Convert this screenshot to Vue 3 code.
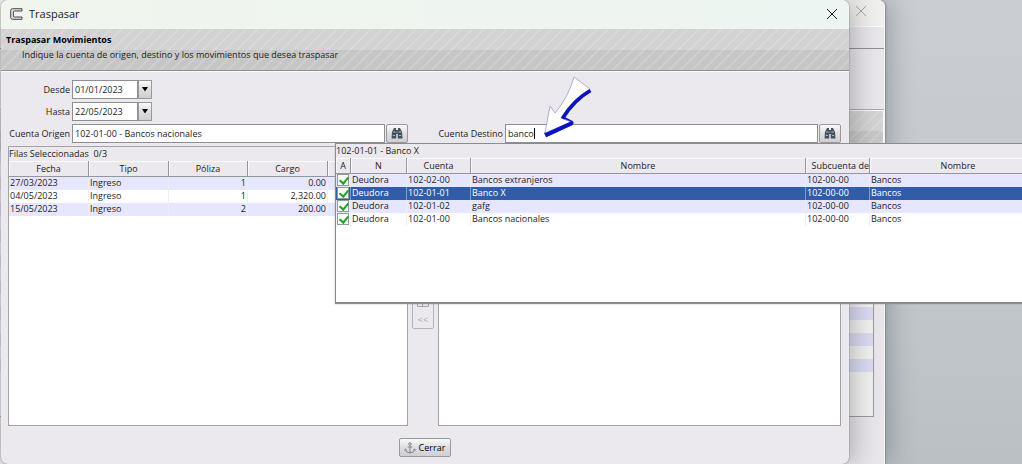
<script setup>
import { ref } from 'vue'

const desde = ref('01/01/2023')
const hasta = ref('22/05/2023')
const origen = ref('102-01-00 - Bancos nacionales')
const destino = ref('banco')

const movimientos = [
  { fecha: '27/03/2023', tipo: 'Ingreso', poliza: '1', cargo: '0.00' },
  { fecha: '04/05/2023', tipo: 'Ingreso', poliza: '1', cargo: '2,320.00' },
  { fecha: '15/05/2023', tipo: 'Ingreso', poliza: '2', cargo: '200.00' },
]

const seleccionada = ref('102-01-01')
const cuentas = [
  { cuenta: '102-02-00', nombre: 'Bancos extranjeros' },
  { cuenta: '102-01-01', nombre: 'Banco X' },
  { cuenta: '102-01-02', nombre: 'gafg' },
  { cuenta: '102-01-00', nombre: 'Bancos nacionales' },
]
</script>

<template>
  <div class="desktop">
    <section class="back-window" aria-hidden="true">
      <header class="back-title">
        <svg class="close-icon" viewBox="0 0 12 12"><path d="M1 1 11 11M11 1 1 11" /></svg>
      </header>
      <div class="back-menu"></div>
      <div class="back-tools"></div>
      <div class="back-banner stripes"></div>
      <div class="back-list"></div>
    </section>

    <section class="dialog" role="dialog" aria-labelledby="dialog-title">
      <header class="title-bar">
        <svg class="app-icon" viewBox="0 0 14 14">
          <path d="M13 1.7H3.6Q1.7 1.7 1.7 3.6V10.4Q1.7 12.3 3.6 12.3H13V10H5.4Q4.4 10 4.4 9V5Q4.4 4 5.4 4H13Z" fill="#dcdcdc" stroke="#4a4a4a" />
        </svg>
        <h1 id="dialog-title">Traspasar</h1>
        <button class="close" type="button" aria-label="Cerrar ventana">
          <svg class="close-icon" viewBox="0 0 12 12"><path d="M1 1 11 11M11 1 1 11" /></svg>
        </button>
      </header>

      <div class="banner stripes">
        <h2>Traspasar Movimientos</h2>
        <p>Indique la cuenta de origen, destino y los movimientos que desea traspasar</p>
      </div>

      <form class="content" @submit.prevent>
        <div class="field">
          <label class="label-left" for="desde">Desde</label>
          <input id="desde" v-model="desde" class="date" type="text" />
          <button class="drop" type="button" aria-label="Elegir fecha desde">
            <svg viewBox="0 0 8 5"><path d="M1 0H7L4 4.5Z" /></svg>
          </button>
        </div>
        <div class="field">
          <label class="label-left" for="hasta">Hasta</label>
          <input id="hasta" v-model="hasta" class="date" type="text" />
          <button class="drop" type="button" aria-label="Elegir fecha hasta">
            <svg viewBox="0 0 8 5"><path d="M1 0H7L4 4.5Z" /></svg>
          </button>
        </div>

        <div class="accounts">
          <div class="field">
            <label class="label-left" for="origen">Cuenta Origen</label>
            <input id="origen" v-model="origen" class="grow" type="text" />
            <button class="find" type="button" aria-label="Buscar cuenta origen">
              <svg viewBox="0 0 12 11">
                <path d="M3 0H5V2H7V0H9L11 4 11.5 10.5H6.8V6H5.2V10.5H.5L1 4Z" fill="#46505a" />
                <path d="M2 4H4.6M7.4 4H10M1.8 7.5H4M8 7.5H10.2M5.5 4H6.5" stroke="#a3b6c4" />
              </svg>
            </button>
          </div>
          <div class="field">
            <label class="label-right" for="destino">Cuenta Destino</label>
            <span class="typing grow">
              <input id="destino" v-model="destino" type="text" />
              <i class="caret"></i>
            </span>
            <button class="find" type="button" aria-label="Buscar cuenta destino">
              <svg viewBox="0 0 12 11">
                <path d="M3 0H5V2H7V0H9L11 4 11.5 10.5H6.8V6H5.2V10.5H.5L1 4Z" fill="#46505a" />
                <path d="M2 4H4.6M7.4 4H10M1.8 7.5H4M8 7.5H10.2M5.5 4H6.5" stroke="#a3b6c4" />
              </svg>
            </button>
          </div>
        </div>

        <div class="lists">
          <div class="list">
            <table class="moves">
              <caption>Filas Seleccionadas&nbsp; 0/3</caption>
              <colgroup>
                <col class="c-move" /><col class="c-move" /><col class="c-poliza" /><col class="c-move" /><col />
              </colgroup>
              <thead>
                <tr><th>Fecha</th><th>Tipo</th><th>Póliza</th><th>Cargo</th><th></th></tr>
              </thead>
              <tbody>
                <tr v-for="m in movimientos" :key="m.fecha">
                  <td>{{ m.fecha }}</td>
                  <td>{{ m.tipo }}</td>
                  <td class="num">{{ m.poliza }}</td>
                  <td class="num">{{ m.cargo }}</td>
                  <td></td>
                </tr>
              </tbody>
            </table>
          </div>
          <div class="transfer">
            <button type="button" disabled aria-label="Quitar selección">
              <svg viewBox="0 0 12 9"><path d="M.5.5H11.5V8.5H.5ZM5.5 1V8M2 6 4 3M4 3V6" fill="none" stroke="#a5a3a8" /></svg>
            </button>
            <button type="button" disabled>&lt;&lt;</button>
          </div>
          <div class="list"></div>
        </div>

        <footer>
          <button class="cerrar" type="button">
            <svg viewBox="0 0 12 12">
              <path d="M6 3.4V11M3.6 5H8.4M1.2 7.2Q1.8 10.8 6 11Q10.2 10.8 10.8 7.2M.6 8.6 1.4 7 2.8 8.2M9.2 8.2 10.6 7 11.4 8.6" />
              <circle cx="6" cy="2" r="1.3" />
            </svg>
            Cerrar
          </button>
        </footer>
      </form>
    </section>

    <section class="popup" aria-label="Cuentas encontradas">
      <table class="results">
        <caption>102-01-01 - Banco X</caption>
        <colgroup>
          <col class="r-a" /><col class="r-n" /><col class="r-code" /><col /><col class="r-code" /><col class="r-parent" />
        </colgroup>
        <thead>
          <tr><th>A</th><th>N</th><th>Cuenta</th><th>Nombre</th><th class="cut">Subcuenta de</th><th>Nombre</th></tr>
        </thead>
        <tbody>
          <tr
            v-for="c in cuentas"
            :key="c.cuenta"
            :class="{ selected: c.cuenta === seleccionada }"
            @click="seleccionada = c.cuenta"
          >
            <td class="check"><input type="checkbox" checked :aria-label="'Activa ' + c.cuenta" /></td>
            <td>Deudora</td>
            <td>{{ c.cuenta }}</td>
            <td>{{ c.nombre }}</td>
            <td>102-00-00</td>
            <td>Bancos</td>
          </tr>
        </tbody>
      </table>
    </section>

    <svg class="pointer" viewBox="0 0 52 66" aria-hidden="true">
      <path d="M46 15Q30 24 18 43L28 48 2 60" fill="none" stroke="#0c14c0" stroke-width="5" stroke-linejoin="round" />
      <path d="M31 2 47 14Q29 24 18 43L28 47 2 58 7 31 12 38Q25 23 31 2Z" fill="#fff" stroke="#9a9ad4" stroke-width=".8" />
      <path d="M47.5 15.5Q31 25 19.500 43.500M29 48 3 60" fill="none" stroke="#0c14c0" stroke-width="3.6" />
    </svg>
  </div>
</template>

<style>
html,
body {
  margin: 0;
  overflow: hidden;
}
</style>

<style scoped>
* {
  box-sizing: border-box;
}

.desktop {
  position: relative;
  min-height: 100vh;
  overflow: hidden;
  background: linear-gradient(#cacdd2, #c4c9cd 50%, #bac0c4);
  color: #1c1c1c;
  font: 9px/13px "Open Sans", "Noto Sans", sans-serif;
}

button,
input {
  margin: 0;
  color: inherit;
  font: inherit;
}

.stripes {
  background:
    repeating-linear-gradient(135deg, transparent 0 4px, rgba(255, 255, 255, 0.16) 5px 6px, transparent 7px 8px),
    linear-gradient(#d2d2d2 0 50%, #c6c6c6 50%);
}

/* Window behind the dialog */
.back-window {
  position: absolute;
  inset: 0 137px 0 0;
  display: flex;
  flex-direction: column;
  border-right: 1px solid #f4f4f4;
  border-radius: 0 6px 0 0;
  background: #e8e5eb;
  box-shadow: 1px 0 2px #858b90, 6px 0 24px rgba(70, 80, 90, 0.35);
}

.back-title {
  display: flex;
  justify-content: flex-end;
  height: 27px;
  padding: 5px 17px 0 0;
  border-bottom: 1px solid #fafafa;
  background: #efefed;
  border-radius: 0 6px 0 0;
}

.back-menu {
  height: 22px;
  border-bottom: 1px solid #8f8f8f;
}

.back-tools {
  height: 61px;
  border-bottom: 1px solid #aaa;
}

.back-banner {
  height: 41px;
  border-top: 1px solid #f8f8f8;
  border-right: 1px solid #f8f8f8;
}

.back-list {
  width: calc(100% - 10px);
  height: 266px;
  border: solid #999;
  border-width: 0 1px 1px 0;
  background:
    linear-gradient(transparent 221px, #f2f1f2 221px),
    repeating-linear-gradient(#dadaf3 0 13px, #f2f1f2 13px 26px);
}

.close-icon {
  display: block;
  width: 12px;
  height: 12px;
  fill: none;
  stroke: currentColor;
}

.back-title .close-icon {
  color: #a6a6a6;
}

/* Dialog */
.dialog {
  position: absolute;
  inset: 0 173px 0 1px;
  display: flex;
  flex-direction: column;
  border-radius: 7px;
  background: #ebe8ee;
  box-shadow: 0 0 2px #777, 6px 0 24px rgba(60, 60, 60, 0.3);
}

.title-bar {
  display: flex;
  align-items: center;
  height: 29px;
  padding: 0 11px 2px 8px;
  border-radius: 7px 7px 0 0;
  background: linear-gradient(90deg, #f0f5ed, #edf5f2);
}

.app-icon {
  width: 14px;
  height: 14px;
}

h1 {
  flex: 1;
  margin: 0 0 0 6px;
  font-size: 11px;
  font-weight: 400;
}

.close {
  padding: 0;
  border: 0;
  background: none;
}

.banner {
  height: 42px;
  padding: 4px 5px 0;
  border-bottom: 1px solid #8e8e8e;
}

.banner h2 {
  margin: 0;
  color: #000;
  font-size: 9px;
  font-weight: 700;
}

.banner p {
  margin: 2px 16px;
}

.content {
  display: flex;
  flex: 1;
  flex-direction: column;
  gap: 3px;
  padding: 8px 8px 0 7px;
  border-top: 1px solid #fafafa;
}

.field {
  display: flex;
  align-items: center;
  height: 19px;
}

.field label {
  padding-right: 2px;
  text-align: right;
  white-space: nowrap;
}

.label-left {
  width: 64px;
}

.label-right {
  width: 67px;
}

.field input {
  min-width: 0;
  height: 19px;
  padding: 0 2px;
  border: 1px solid #8f8f93;
  border-radius: 0;
  outline: none;
  background: #fff;
}

.field input.date {
  width: 66px;
}

.grow {
  flex: 1;
}

.typing {
  position: relative;
  display: flex;
}

.typing input {
  width: 100%;
}

.caret {
  position: absolute;
  top: 4px;
  left: 29px;
  width: 1px;
  height: 11px;
  background: #000;
}

.drop,
.find,
.cerrar {
  display: flex;
  align-items: center;
  justify-content: center;
  padding: 0;
  border: 1px solid #99999c;
  background: linear-gradient(#fafafa, #dedee1 50%, #cfcfd3);
}

.drop {
  width: 14px;
  height: 19px;
}

.drop svg {
  width: 8px;
  height: 5px;
}

.find {
  width: 22px;
  height: 19px;
  margin-left: 1px;
  border-radius: 2px;
}

.find svg {
  width: 12px;
  height: 11px;
}

.accounts {
  display: grid;
  grid-template-columns: 400fr 403fr;
  gap: 30px;
}

.lists {
  display: grid;
  flex: 1;
  grid-template-columns: 400fr 22px 403fr;
  gap: 4px;
}

.list {
  overflow: hidden;
  border: 1px solid #a3a3a6;
  background: #fff;
}

.transfer {
  display: flex;
  flex-direction: column;
  align-self: center;
  justify-content: flex-end;
  gap: 4px;
  height: 86px;
  padding-bottom: 2px;
  border: 1px solid #b5b3b8;
  border-radius: 2px;
}

.transfer button {
  height: 13px;
  padding: 0;
  border: 0;
  background: none;
  color: #a5a3a8;
  line-height: 13px;
}

.transfer svg {
  display: block;
  width: 12px;
  height: 9px;
  margin: 2px auto;
}

footer {
  display: flex;
  justify-content: center;
  height: 35px;
  padding-top: 9px;
}

.cerrar {
  gap: 3px;
  width: 52px;
  height: 19px;
  border-radius: 2px;
  color: #000;
}

.cerrar svg {
  width: 12px;
  height: 12px;
  fill: none;
  stroke: #85858a;
}

/* Tables */
table {
  width: 100%;
  border-collapse: separate;
  border-spacing: 0;
  table-layout: fixed;
}

caption {
  height: 14px;
  background: #ebe8ee;
  line-height: 14px;
  text-align: left;
  white-space: nowrap;
}

th {
  height: 16px;
  padding: 1px 0 0;
  overflow: hidden;
  border: solid #96969a;
  border-width: 0 1px 1px 0;
  background: #ebe8ee;
  box-shadow: inset 1px 1px #fafafa;
  font-weight: 400;
  line-height: 14px;
  white-space: nowrap;
}

td {
  height: 13px;
  padding: 0 1px 1px;
  border-right: 1px solid #eeeef2;
  line-height: 12px;
  white-space: nowrap;
}

tbody tr:nth-child(odd) {
  background: #e6e6fe;
}

.num {
  text-align: right;
}

.c-move {
  width: 80px;
}

.c-poliza {
  width: 79px;
}

/* Account search results */
.popup {
  position: absolute;
  top: 143px;
  right: -26px;
  left: 335px;
  height: 160px;
  border: 1px solid #8c8c8c;
  background: #fff;
  box-shadow: 0 1px 1px #888;
}

.r-a {
  width: 15px;
}

.r-n {
  width: 56px;
}

.r-code {
  width: 64px;
}

.r-parent {
  width: 177px;
}

.cut {
  text-align: right;
}

td.check {
  padding: 0;
}

.check input {
  display: block;
  width: 12px;
  height: 12px;
  margin: 0 1px 1px;
  border: 1px solid #8f9a9a;
  appearance: none;
  background: #fafafa;
}

.check input:checked::after {
  display: block;
  width: 4px;
  height: 7px;
  margin: 0 3px;
  border: solid #20a32a;
  border-width: 0 2px 2px 0;
  content: "";
  transform: rotate(40deg);
}

tbody tr.selected {
  background: #315da8;
  color: #fff;
}

.selected td {
  border-right-color: #7f9bcb;
}

/* Arrow pointing at the destination field */
.pointer {
  position: absolute;
  top: 75px;
  left: 543px;
  width: 52px;
  height: 66px;
}
</style>
